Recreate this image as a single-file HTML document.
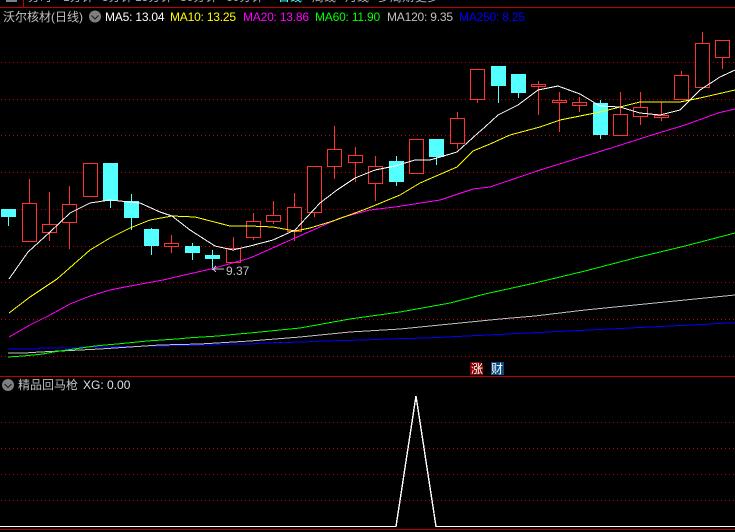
<!DOCTYPE html>
<html><head><meta charset="utf-8">
<style>
html,body{margin:0;padding:0;background:#000;}
#w{position:relative;width:735px;height:532px;overflow:hidden;background:#000;font:12px "Liberation Sans","Noto Sans CJK SC",sans-serif;}
#w span{position:absolute;white-space:nowrap;line-height:14px;}
svg{position:absolute;left:0;top:0;}
.t{top:-10px;color:#b0b0b0;font-size:12px;}
.m{top:10px;letter-spacing:-.2px;}
</style></head><body><div id="w">
<svg width="735" height="532" viewBox="0 0 735 532" shape-rendering="crispEdges">
<g stroke="#c00000" stroke-width="1" stroke-dasharray="1 3" fill="none">
<path d="M1 62.5H735M1 99.5H735M1 135.5H735M1 172.5H735M1 209.5H735M1 246.5H735M1 282.5H735M1 319.5H735M1 356.5H735M1 422.5H735M1 448.5H735M1 474.5H735M1 500.5H735"/>
</g>
<g fill="none" stroke="#ff3232" stroke-width="1">
<path d="M29.5 179V242M49.5 192V241M69.5 186V249M171.5 235V253M233.5 237V262M253.5 213V240M273.5 201V224M294.5 193V241M314.5 212V217M334.5 126V179M355.5 147V182M375.5 156V201M457.5 112V149M477.5 99V103M538.5 81V115M559.5 92V132M579.5 97V112M620.5 92V135M640.5 92V125M661.5 102V121M681.5 71V99M702.5 32V88M722.5 57V69"/>
</g>
<g fill="#000" stroke="#ff3232" stroke-width="1">
<rect x="22.5" y="203.5" width="14" height="38"/>
<rect x="42.5" y="224.5" width="14" height="8"/>
<rect x="62.5" y="204.5" width="14" height="18"/>
<rect x="83.5" y="163.5" width="14" height="33"/>
<rect x="164.5" y="243.5" width="14" height="3"/>
<rect x="226.5" y="248.5" width="14" height="14"/>
<rect x="246.5" y="221.5" width="14" height="16"/>
<rect x="266.5" y="215.5" width="14" height="6"/>
<rect x="287.5" y="207.5" width="14" height="24"/>
<rect x="307.5" y="166.5" width="14" height="46"/>
<rect x="327.5" y="149.5" width="14" height="17"/>
<rect x="348.5" y="155.5" width="14" height="7"/>
<rect x="368.5" y="166.5" width="14" height="17"/>
<rect x="409.5" y="139.5" width="14" height="34"/>
<rect x="450.5" y="118.5" width="14" height="25"/>
<rect x="470.5" y="69.5" width="14" height="30"/>
<rect x="531.5" y="84.5" width="14" height="2"/>
<rect x="552.5" y="100.5" width="14" height="2"/>
<rect x="572.5" y="102.5" width="14" height="3"/>
<rect x="613.5" y="114.5" width="14" height="21"/>
<rect x="633.5" y="107.5" width="14" height="9"/>
<rect x="654.5" y="115.5" width="14" height="2"/>
<rect x="674.5" y="75.5" width="14" height="24"/>
<rect x="695.5" y="43.5" width="14" height="44"/>
<rect x="715.5" y="40.5" width="14" height="17"/>
</g>
<g fill="none" stroke="#54ffff" stroke-width="1">
<path d="M8.5 217V226M110.5 201V208M131.5 194V230M151.5 228V255M192.5 243V260M212.5 250V270M396.5 156V186M436.5 157V165M498.5 86V103M518.5 93V98M600.5 100V139"/>
</g>
<g fill="#54ffff">
<rect x="1" y="209" width="15" height="8"/>
<rect x="103" y="163" width="15" height="38"/>
<rect x="124" y="201" width="15" height="17"/>
<rect x="144" y="229" width="15" height="17"/>
<rect x="185" y="246" width="15" height="7"/>
<rect x="205" y="255" width="15" height="4"/>
<rect x="389" y="161" width="15" height="21"/>
<rect x="429" y="139" width="15" height="18"/>
<rect x="491" y="66" width="15" height="20"/>
<rect x="511" y="74" width="15" height="19"/>
<rect x="593" y="103" width="15" height="32"/>
</g>
<g fill="none" stroke-width="1">
<polyline stroke="#0000ff" points="8,349 39,349 39,348 80,348 80,347 100,347 213,345 223,344 250,344 263,343 303,342 323,341 365,340 386,339 426,338 447,337 467,336 488,335 508,334 528,333 548,332 568,331 590,330 610,329 630,328 651,327 671,326 692,325 712,324 727,323 735,323"/>
<polyline stroke="#c0c0c0" points="8,353 25,353 40,352 60,351 100,349 160,345 200,344 250,341 300,337 350,332 400,329 450,324 500,319 535,316 585,310 635,305 685,300 735,295"/>
<polyline stroke="#00ff00" points="8,357 23,356 33,355 43,354 53,352 67,350 95,346 105,345 117,344 127,343 137,342 147,341 162,340 177,339 187,338 202,337 218,336 238,334 250,333 300,328 350,319 400,312 450,303 485,294 535,283 585,271 635,258 685,246 735,233"/>
<polyline stroke="#ff00ff" points="9,337 30,325 50,315 70,304 90,296 110,290 125,287 163,280 215,268 250,258 295,238 340,218 370,210 395,207 440,200 473,189 490,187 540,170 608,149 652,135 685,125 718,113 735,109"/>
<polyline stroke="#ffff00" points="9,313 30,297 57,279 90,250 110,238 130,228 150,220 172,216 195,217 230,226 250,226 273,227 295,231 310,228 333,221 366,209 400,195 420,183 457,167 473,151 490,144 510,135 540,127 560,120 600,112 620,107 640,102 680,102 700,98 735,90"/>
<polyline stroke="#ffffff" points="9,279 28,252 50,232 70,213 90,203 110,200 140,203 160,212 172,216 190,230 215,246 233,250 250,246 273,240 295,230 320,203 337,190 355,178 375,170 395,166 415,160 430,160 457,152 478,133 485,127 498,115 518,105 538,90 558,86 580,94 600,106 620,107 640,113 660,115 680,110 700,90 720,77 735,70"/>
<polyline stroke="#ffffff" points="0,526.5 396,526.5 416,396 436,526.5 735,526.5" stroke-width="1.4"/>
<path stroke="#c0c0c0" d="M213 269H224M213 269L216 266M213 269L216 272"/>
</g>
<g fill="#c00000">
<rect x="0" y="7" width="735" height="1"/>
<rect x="23" y="0" width="1" height="7"/>
<rect x="0" y="376" width="735" height="1"/>
<rect x="0" y="529" width="735" height="1"/>
</g>
<rect x="6" y="0" width="11" height="2" fill="#808080"/>
<g shape-rendering="auto">
<circle cx="95" cy="16.5" r="6" fill="#808080"/>
<path d="M91.5 15.5L95 19L98.5 15.5" fill="none" stroke="#222" stroke-width="1.2"/>
<circle cx="8" cy="385" r="6" fill="#808080"/>
<path d="M4.5 384L8 387.5L11.5 384" fill="none" stroke="#222" stroke-width="1.2"/>
</g>
<path d="M470 362H480L483 365V375H470Z" fill="#8b0000"/>
<rect x="491" y="362" width="13" height="13" fill="#0b4a82"/>
</svg>

<span class="t" style="left:28px">分时</span>
<span class="t" style="left:63px">1分钟</span>
<span class="t" style="left:102px">5分钟</span>
<span class="t" style="left:135px">15分钟</span>
<span class="t" style="left:180px">30分钟</span>
<span class="t" style="left:226px">60分钟</span>
<span class="t" style="left:278px;color:#54ffff">日线</span>
<span class="t" style="left:312px">周线</span>
<span class="t" style="left:345px">月线</span>
<span class="t" style="left:378px">多周期</span>
<span class="t" style="left:415px">更多</span>
<span class="t" style="left:443px;font-size:9px">▾</span>
<div style="position:absolute;left:0;top:7px;width:735px;height:1px;background:#c00000"></div>
<div style="position:absolute;left:0;top:8px;width:735px;height:1px;background:#000"></div>

<span style="left:3px;top:10px;color:#c0c0c0">沃尔核材(日线)</span>
<span class="m" style="left:105px;color:#fff">MA5: 13.04</span>
<span class="m" style="left:170px;color:#ff0">MA10: 13.25</span>
<span class="m" style="left:243px;color:#f0f">MA20: 13.86</span>
<span class="m" style="left:315px;color:#0f0">MA60: 11.90</span>
<span class="m" style="left:387px;color:#c0c0c0">MA120: 9.35</span>
<span class="m" style="left:459px;color:#0000ff">MA250: 8.25</span>
<span style="left:226px;top:264px;color:#c0c0c0">9.37</span>
<span style="left:471px;top:362px;color:#fff;font-size:12px">涨</span>
<span style="left:491px;top:362px;color:#fff;font-size:12px">财</span>
<span style="left:18px;top:378px;color:#c0c0c0">精品回马枪</span>
<span style="left:83px;top:378px;color:#e0e0e0">XG: 0.00</span>
</div></body></html>
